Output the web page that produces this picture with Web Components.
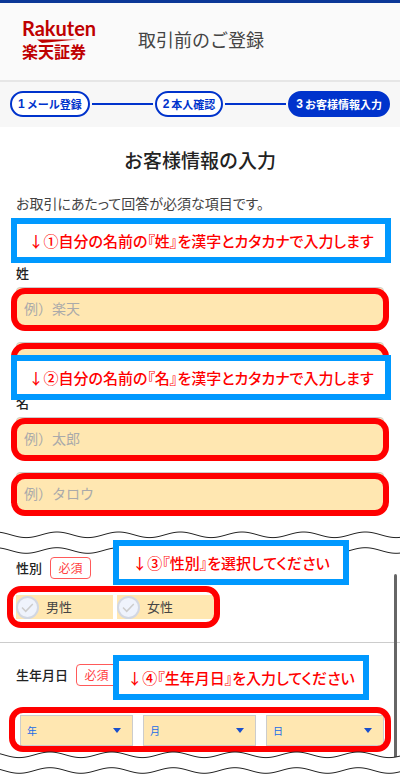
<!DOCTYPE html>
<html lang="ja">
<head>
<meta charset="utf-8">
<meta name="viewport" content="width=device-width, initial-scale=1">
<title>取引前のご登録</title>
<style>
    body{
        margin: 0;
        background: #fff;
        color: #333;
        font-family: "Noto Sans CJK JP", sans-serif;
        font-size: 14px;
        line-height: 20px;
    }
    main{
        display: block;
        overflow: hidden;
    }
    h1{
        margin: 20px 16px 0;
        font-size: 19px;
        line-height: 26px;
        font-weight: 500;
        text-align: center;
        color: #222;
    }
    .lead{
        margin: 20px 16px 5px;
        color: #444;
        font-feature-settings: "palt";
    }
    .sei-note{
        margin: 0 9px 0 11px;
    }
    .mei{
        position: relative;
        margin-top: 9px;
    }
    .mei-note{
        position: absolute;
        top: -38px;
        left: 11px;
        right: 9px;
    }
    .cut{
        margin-top: 17px;
    }
    .details{
        position: relative;
        padding-top: 3px;
    }
    .gender-note, .birth-note{
        position: absolute;
        left: 113px;
        z-index: 2;
    }
    .gender-note{
        top: -14px;
        width: 236px;
    }
    .birth-note{
        top: 101px;
        width: 256px;
    }
    .thumb{
        position: absolute;
        top: 20px;
        right: 3px;
        bottom: -12px;
        width: 3px;
        border-radius: 2px;
        background: #666;
    }
    hr{
        margin: 23px 0 21px;
        border: 0;
        border-top: 1px solid #ccc;
    }
    .end{
        margin-top: 5px;
    }
</style>
</head>
<body>

<template id="app-header">
    <style>
        :host{
            display: flex;
            align-items: flex-start;
            gap: 44px;
            box-sizing: border-box;
            height: 82px;
            padding: 15px 22px 0;
            border-top: 3px solid #0b3797;
            border-bottom: 2px solid #e6e6e6;
            background: #fafafa;
        }
        .logo{
            display: block;
            width: 72px;
            color: #bf0000;
            text-decoration: none;
            white-space: nowrap;
        }
        .latin{
            display: block;
            font: 700 20px/20px Lato, sans-serif;
        }
        .logo svg{
            display: block;
            width: 72px;
            height: 4px;
            margin-top: 1px;
        }
        .kanji{
            display: block;
            font-size: 16px;
            line-height: 16px;
            font-weight: 700;
        }
        .title{
            padding-top: 9px;
            font-size: 18px;
            line-height: 24px;
            color: #444;
        }
    </style>
    <a class="logo" href="#">
        <span class="latin">Rakuten</span>
        <svg viewBox="0 0 72 4" aria-hidden="true"><path d="M15 0.4H55L20 4Z" fill="#bf0000"/></svg>
        <span class="kanji">楽天証券</span>
    </a>
    <span class="title"><slot></slot></span>
</template>

<template id="step-bar">
    <style>
        :host{
            display: block;
            padding: 9px 10px 10px;
            background: #f7f7f7;
        }
        ol{
            display: flex;
            align-items: center;
            gap: 2px;
            margin: 0;
            padding: 0;
            list-style: none;
            white-space: nowrap;
        }
        li{
            display: flex;
            align-items: center;
            gap: 2px;
            box-sizing: border-box;
            height: 26px;
            padding: 0 6px;
            border: 2px solid #0033cc;
            border-radius: 13px;
            background: #fff;
            color: #0033cc;
            font-size: 11px;
            font-weight: 700;
        }
        li.current{
            background: #0033cc;
            color: #fff;
        }
        .line{
            flex: 1;
            height: 2px;
            padding: 0;
            border: 0;
            border-radius: 0;
            background: #0033cc;
        }
        b{
            font-family: "Liberation Sans", sans-serif;
            font-size: 12px;
        }
    </style>
    <ol></ol>
</template>

<template id="note-box">
    <style>
        :host{
            display: block;
            box-sizing: border-box;
            height: 45px;
            border: 6px solid #0099ff;
            background: #fff;
            color: #f00;
            font-size: 15px;
            line-height: 33px;
            font-weight: 500;
            text-align: center;
            white-space: nowrap;
            font-feature-settings: "palt";
        }
    </style>
    <slot></slot>
</template>

<template id="mark-frame">
    <style>
        :host{
            display: block;
            position: relative;
            --mark: 1px -5px -2px;
        }
        :host::after{
            content: "";
            position: absolute;
            inset: var(--mark);
            border: 6px solid #f00;
            border-radius: 14px;
            pointer-events: none;
        }
    </style>
    <slot></slot>
</template>

<template id="name-field">
    <style>
        :host{
            display: block;
        }
        .field{
            display: flex;
            flex-direction: column;
            padding: 0 16px;
        }
        label{
            margin-bottom: 4px;
            font-size: 13px;
            font-weight: 500;
            color: #222;
        }
        mark-frame + mark-frame{
            margin-top: 13px;
        }
        input{
            display: block;
            box-sizing: border-box;
            width: 100%;
            height: 42px;
            margin: 0;
            padding: 0 8px 0 7px;
            border: 1px solid #ccc;
            border-radius: 4px;
            background: #ffe7b1;
            color: #333;
            font: inherit;
            font-size: 14px;
        }
        input::placeholder{
            color: #aaa;
            opacity: 1;
        }
    </style>
    <div class="field">
        <label for="kanji"></label>
        <mark-frame><input id="kanji" type="text"></mark-frame>
        <mark-frame><input id="kana" type="text"></mark-frame>
    </div>
    <slot></slot>
</template>

<template id="field-title">
    <style>
        :host{
            display: flex;
            align-items: center;
            gap: 8px;
            height: 22px;
            padding: 0 16px;
            font-size: 13px;
            font-weight: 500;
            color: #222;
        }
        .badge{
            box-sizing: border-box;
            width: 41px;
            border: 1px solid #ff5a5a;
            border-radius: 4px;
            color: #ff4040;
            font-size: 12px;
            font-weight: 400;
            text-align: center;
        }
    </style>
    <slot></slot>
    <span class="badge">必須</span>
</template>

<template id="gender-field">
    <style>
        :host{
            display: flex;
            padding: 16px 16px 0;
        }
        mark-frame{
            --mark: -9px -6px -9px -9px;
        }
        .options{
            display: flex;
            gap: 4px;
        }
        label{
            display: flex;
            align-items: center;
            gap: 7px;
            position: relative;
            width: 97px;
            height: 24px;
            background: #ffe7b1;
            font-size: 13px;
            color: #444;
        }
        input{
            appearance: none;
            box-sizing: border-box;
            width: 23px;
            height: 23px;
            margin: 0;
            border: 2px solid #d2d7e2;
            border-radius: 50%;
            background: #eff3fc;
        }
        svg{
            position: absolute;
            left: 0;
            width: 23px;
            height: 23px;
            fill: none;
            stroke: #ccc;
            stroke-width: 1.5;
            pointer-events: none;
        }
        input:checked + svg{
            stroke: #0033cc;
        }
    </style>
    <mark-frame>
        <div class="options" role="radiogroup" aria-label="性別">
            <label><input type="radio" name="gender"><svg viewBox="0 0 23 23"><path d="M6 11.5L9.7 15.3L16.8 8"/></svg>男性</label>
            <label><input type="radio" name="gender"><svg viewBox="0 0 23 23"><path d="M6 11.5L9.7 15.3L16.8 8"/></svg>女性</label>
        </div>
    </mark-frame>
</template>

<template id="birth-field">
    <style>
        :host{
            display: block;
            padding: 29px 16px 0 20px;
        }
        mark-frame{
            --mark: -8px -7px -6px -11px;
        }
        .dates{
            display: grid;
            grid-template-columns: 113fr 113fr 118fr;
            gap: 10px;
        }
        .cell{
            position: relative;
        }
        select{
            appearance: none;
            display: block;
            box-sizing: border-box;
            width: 100%;
            height: 31px;
            padding: 0 20px 0 6px;
            border: 1px solid #ccc;
            border-radius: 0;
            background: #ffe7b1;
            color: #1a6be8;
            font: inherit;
            font-size: 10px;
        }
        .cell::after{
            content: "";
            position: absolute;
            top: 13px;
            right: 12px;
            border: 4px solid transparent;
            border-top: 5px solid #1a50cc;
            border-bottom: 0;
            pointer-events: none;
        }
    </style>
    <mark-frame>
        <div class="dates">
            <div class="cell"><select aria-label="年"><option>年</option></select></div>
            <div class="cell"><select aria-label="月"><option>月</option></select></div>
            <div class="cell"><select aria-label="日"><option>日</option></select></div>
        </div>
    </mark-frame>
</template>

<template id="wave-cut">
    <style>
        :host{
            display: block;
            position: relative;
            height: 23px;
            overflow: hidden;
        }
        svg{
            display: block;
            width: 100%;
            height: 23px;
        }
    </style>
    <svg aria-hidden="true">
        <path class="fill" fill="#fff"/>
        <path class="top" fill="none" stroke="#222"/>
        <path class="bottom" fill="none" stroke="#222"/>
    </svg>
</template>

<app-header>取引前のご登録</app-header>
<step-bar steps="メール登録,本人確認,お客様情報入力" current="3"></step-bar>
<main>
    <h1>お客様情報の入力</h1>
    <p class="lead">お取引にあたって回答が必須な項目です。</p>
    <note-box class="sei-note">↓①自分の名前の『姓』を漢字とカタカナで入力します</note-box>
    <name-field label="姓" kanji="例）楽天"></name-field>
    <name-field class="mei" label="名" kanji="例）太郎" kana="例）タロウ">
        <note-box class="mei-note">↓②自分の名前の『名』を漢字とカタカナで入力します</note-box>
    </name-field>
    <wave-cut class="cut" crest="57"></wave-cut>
    <section class="details">
        <field-title>性別</field-title>
        <gender-field></gender-field>
        <hr>
        <field-title>生年月日</field-title>
        <birth-field></birth-field>
        <note-box class="gender-note">↓③『性別』を選択してください</note-box>
        <note-box class="birth-note">↓④『生年月日』を入力してください</note-box>
        <div class="thumb"></div>
    </section>
    <wave-cut class="end" crest="50"></wave-cut>
</main>

<script type="text/javascript">
    class BaseElement extends HTMLElement{

        constructor(){
            super();
            this.attachShadow({mode: 'open'});
            const template = document.getElementById(this.localName);
            this.shadowRoot.appendChild(template.content.cloneNode(true));
        }

    }

    class StepBar extends BaseElement{

        connectedCallback(){
            const current = Number(this.getAttribute('current'));
            const steps = this.getAttribute('steps').split(',');
            this.shadowRoot.querySelector('ol').innerHTML = steps.map( (step, i) => {
                const line = i ? '<li class="line" role="presentation"></li>' : '';
                const state = i + 1 === current ? ' class="current" aria-current="step"' : '';
                return `${line}<li${state}><b>${i + 1}</b><span>${step}</span></li>`;
            }).join('');
        }

    }

    class NameField extends BaseElement{

        connectedCallback(){
            const label = this.getAttribute('label');
            const kanji = this.shadowRoot.querySelector('#kanji');
            const kana = this.shadowRoot.querySelector('#kana');
            this.shadowRoot.querySelector('label').textContent = label;
            kanji.placeholder = this.getAttribute('kanji') || '';
            kana.placeholder = this.getAttribute('kana') || '';
            kana.setAttribute('aria-label', `${label}（カタカナ）`);
        }

    }

    class WaveCut extends BaseElement{

        // points of one wavy line, wide enough for any window
        line(middle){
            const crest = Number(this.getAttribute('crest'));
            const points = [];
            for(let x = 0; x <= 2400; x += 2){
                const y = middle - 2.8 * Math.cos((x - crest) / 61.67 * 2 * Math.PI);
                points.push(`${x} ${y.toFixed(2)}`);
            }
            return points;
        }

        connectedCallback(){
            const top = this.line(3.8);
            const bottom = this.line(19.5);
            const root = this.shadowRoot;
            root.querySelector('.top').setAttribute('d', 'M' + top.join('L'));
            root.querySelector('.bottom').setAttribute('d', 'M' + bottom.join('L'));
            root.querySelector('.fill').setAttribute('d', 'M' + top.concat(bottom.reverse()).join('L') + 'Z');
        }

    }

    window.customElements.define("app-header", class extends BaseElement{});
    window.customElements.define("note-box", class extends BaseElement{});
    window.customElements.define("mark-frame", class extends BaseElement{});
    window.customElements.define("field-title", class extends BaseElement{});
    window.customElements.define("gender-field", class extends BaseElement{});
    window.customElements.define("birth-field", class extends BaseElement{});
    window.customElements.define("step-bar", StepBar);
    window.customElements.define("name-field", NameField);
    window.customElements.define("wave-cut", WaveCut);
</script>
</body>
</html>
